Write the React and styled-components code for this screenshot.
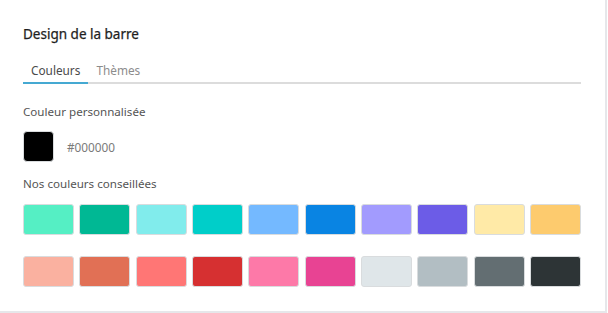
import React, { useState } from "react";
import styled, { createGlobalStyle } from "styled-components";

const GlobalStyle = createGlobalStyle`
  html, body {
    margin: 0;
    padding: 0;
    background: #fff;
  }
  body {
    font-family: "Noto Sans", "Open Sans", sans-serif;
  }
`;

const Panel = styled.div`
  width: 558px;
  padding: 24px 24px 24px 23px;
  background: #fff;
  border-right: 2px solid #e6e7ea;
  border-bottom: 2px solid #e6e7ea;
  display: flex;
  flex-direction: column;
`;

const Title = styled.h2`
  margin: 0;
  font-size: 13.5px;
  line-height: 20px;
  font-weight: 400;
  color: #1e1e1e;
  -webkit-text-stroke: 0.25px #1e1e1e;
`;

const TabBar = styled.div`
  display: flex;
  margin-top: 16px;
  border-bottom: 2px solid #dcdcdc;
`;

const Tab = styled.button`
  background: none;
  border: none;
  border-bottom: 2px solid ${(p) => (p.$active ? "#45a9d2" : "transparent")};
  margin-bottom: -2px;
  padding: 2px 8px 4px;
  font-family: inherit;
  font-size: 11.8px;
  line-height: 16px;
  color: ${(p) => (p.$active ? "#4a4a4a" : "#8c8c8c")};
  cursor: pointer;
`;

const Label = styled.div`
  font-size: 11.6px;
  line-height: 16px;
  color: #555;
  margin-top: ${(p) => p.$top}px;
`;

const CustomRow = styled.div`
  display: flex;
  align-items: center;
  gap: 13px;
  margin-top: 11px;
`;

const Swatch = styled.div`
  box-sizing: border-box;
  height: 31px;
  border-radius: 3px;
  border: 1px solid #d9dcde;
  background: ${(p) => p.$color};
  cursor: pointer;
`;

const BigSwatch = styled(Swatch)`
  width: 31px;
  border-radius: 4px;
`;

const HexText = styled.span`
  font-size: 11.8px;
  color: #7a7a7a;
`;

const Grid = styled.div`
  display: grid;
  grid-template-columns: repeat(10, 1fr);
  column-gap: 5.5px;
  row-gap: 21px;
  margin-top: 12px;
`;

const colors = [
  "#55efc4", "#00b894", "#81ecec", "#00cec9", "#74b9ff",
  "#0984e3", "#a29bfe", "#6c5ce7", "#ffeaa7", "#fdcb6e",
  "#fab1a0", "#e17055", "#ff7675", "#d63031", "#fd79a8",
  "#e84393", "#dfe6e9", "#b2bec3", "#636e72", "#2d3436",
];

export default function App() {
  const [tab, setTab] = useState("colors");
  const [color, setColor] = useState("#000000");

  return (
    <>
      <GlobalStyle />
      <Panel>
        <Title>Design de la barre</Title>
        <TabBar>
          <Tab $active={tab === "colors"} onClick={() => setTab("colors")}>
            Couleurs
          </Tab>
          <Tab $active={tab === "themes"} onClick={() => setTab("themes")}>
            Thèmes
          </Tab>
        </TabBar>
        <Label $top={20}>Couleur personnalisée</Label>
        <CustomRow>
          <BigSwatch $color={color} />
          <HexText>{color.toUpperCase()}</HexText>
        </CustomRow>
        <Label $top={14}>Nos couleurs conseillées</Label>
        <Grid>
          {colors.map((c) => (
            <Swatch key={c} $color={c} onClick={() => setColor(c)} />
          ))}
        </Grid>
      </Panel>
    </>
  );
}
